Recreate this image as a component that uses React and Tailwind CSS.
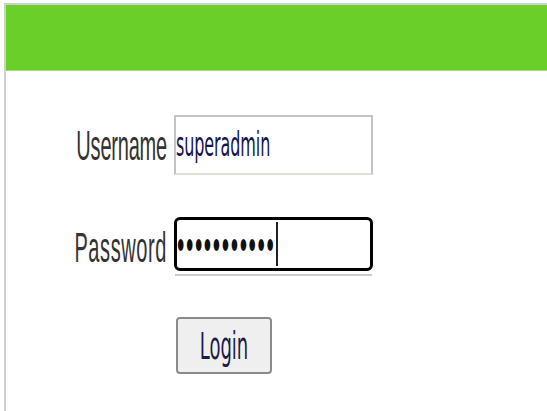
import React from 'react'

// login page: green title bar, two fields and a button
export default function App() {
  const dots = "•••••••••••"

  return (
    <div className="w-[547px] h-[411px] bg-white pl-[4px] pt-[3px] overflow-hidden" style={{ fontFamily: '"Liberation Sans", Arial, sans-serif' }}>
      <div className="h-full border-l-2 border-t-2 border-[#cfcfcf]">
        {/* Header bar */}
        <div className="h-[66px] bg-[#6bcf2a] border-b border-[#9fe070]"></div>

        {/* Form */}
        <div className="flex flex-col pt-[44px]">
          <div className="flex items-center">
            <div className="w-[162px] flex justify-end pr-[1px]">
              <span className="inline-block scale-y-[2.15] text-[20px] text-[#333] tracking-[-0.2px]">Username</span>
            </div>
            <div className="ml-[6px] w-[199px] h-[60px] border-2 border-[#c4c4c4] border-b-[#e2ddd6] bg-white flex items-center">
              <span className="inline-block scale-y-[2.1] text-[16px] text-[#15154a] tracking-[-0.1px]" style={{ fontFamily: '"DejaVu Sans", Verdana, sans-serif' }}>superadmin</span>
            </div>
          </div>

          <div className="flex items-center mt-[42px]">
            <div className="w-[162px] flex justify-end pr-[1px]">
              <span className="inline-block scale-y-[2.15] text-[20px] text-[#333] tracking-[0.6px]">Password</span>
            </div>
            <div className="ml-[6px] w-[199px] flex flex-col">
              <div className="h-[54px] border-[3px] border-black rounded-[6px] bg-white flex items-center">
                <span className="inline-block scale-y-[2.1] text-[21px] text-[#111] tracking-[1.6px] leading-none">{dots}</span>
                <span className="ml-[1px] w-[2px] h-[44px] bg-[#222]"></span>
              </div>
              <div className="mt-[3px] mx-[1px] h-[2px] bg-[#cccccc]"></div>
            </div>
          </div>

          <div className="flex mt-[41px]">
            <div className="w-[170px]"></div>
            <button className="w-[96px] h-[57px] bg-[#efefef] border-2 border-[#8a8a8a] rounded-[4px] flex items-center justify-center">
              <span className="inline-block scale-y-[2.1] text-[18px] text-[#1c1c4a]" style={{ fontFamily: '"DejaVu Sans", Verdana, sans-serif' }}>Login</span>
            </button>
          </div>
        </div>
      </div>
    </div>
  )
}
